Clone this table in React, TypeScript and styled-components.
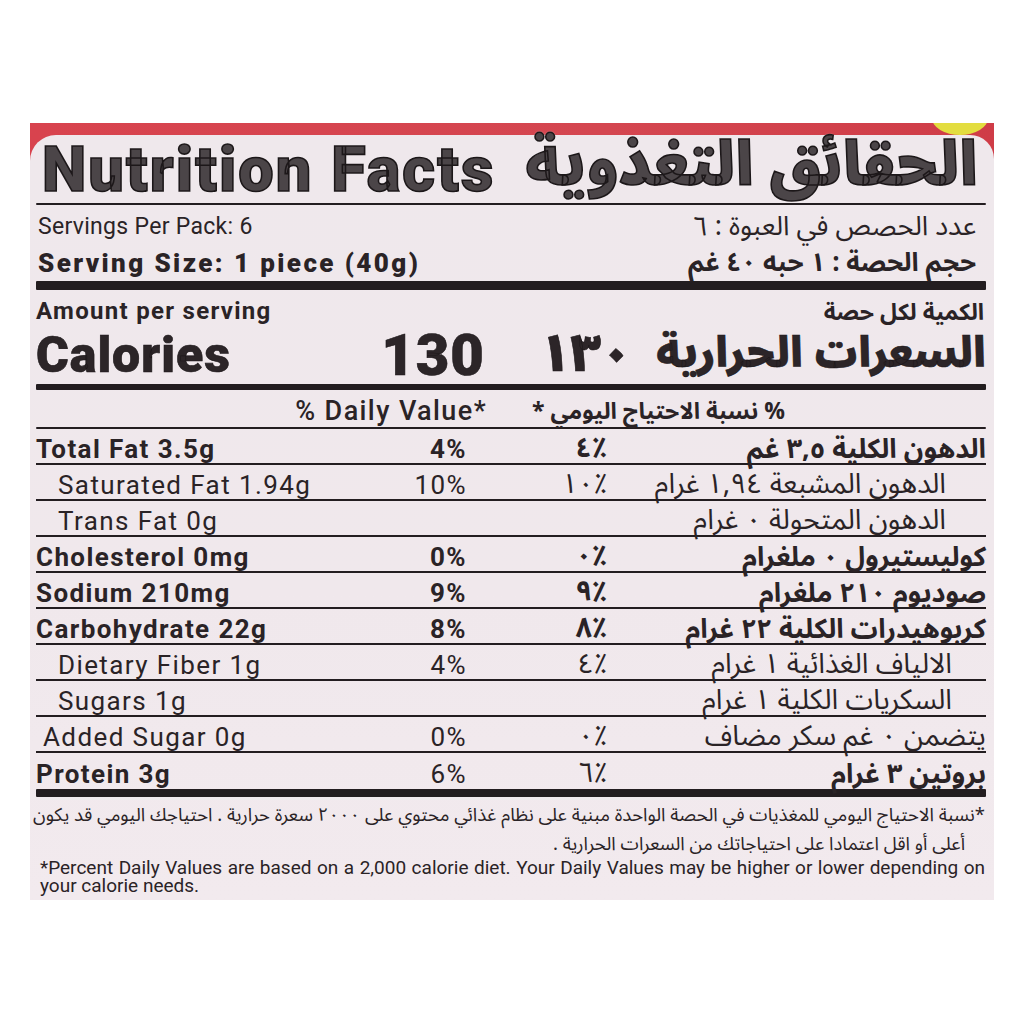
import React from 'react';
import styled, { createGlobalStyle } from 'styled-components';

const EN = `"Roboto", "Liberation Sans", sans-serif`;
const AR = `"Noto Sans Arabic", "Noto Kufi Arabic", "DejaVu Sans", sans-serif`;
const INK = '#2a2326';

const Global = createGlobalStyle`
  html, body { margin: 0; padding: 0; background: #ffffff; }
  body { width: 1024px; height: 1024px; overflow: hidden; }
`;

const Photo = styled.div`
  position: relative;
  margin: 123px 0 0 30px;
  width: 964px;
  height: 777px;
  box-sizing: border-box;
  padding: 12px 0 0 0;
  background: linear-gradient(90deg, #d8434e 0%, #d44650 60%, #cf3c47 100%);
  overflow: hidden;
`;

const Blob = styled.div`
  position: absolute;
  right: 6px;
  top: -22px;
  width: 56px;
  height: 34px;
  border-radius: 50%;
  background: #e3dd3f;
`;

const Label = styled.div`
  height: 100%;
  box-sizing: border-box;
  padding: 0 8px 0 6px;
  background: linear-gradient(180deg, #efe8ec 0%, #f0e8ec 60%, #f2eaee 100%);
  border-radius: 26px 24px 0 0;
  color: ${INK};
  font-family: ${EN};
`;

const TitleRow = styled.div`
  height: 68px;
  display: flex;
  align-items: center;
  justify-content: space-between;
  padding: 0 8px 0 6px;
`;

const Title = styled.div<{ $ar?: boolean }>`
  font-family: ${(p) => (p.$ar ? AR : EN)};
  font-weight: 900;
  font-size: ${(p) => (p.$ar ? '60px' : '63px')};
  line-height: 1;
  color: #4b4548;
  -webkit-text-stroke: 1.6px #1c1719;
  text-shadow: 0 0 2px #ffffff, 0 0 1px #ffffff;
  letter-spacing: ${(p) => (p.$ar ? '0' : '2.1px')};
  direction: ${(p) => (p.$ar ? 'rtl' : 'ltr')};
  padding-bottom: ${(p) => (p.$ar ? '6px' : '0')};
  white-space: nowrap;
`;

const Rule = styled.div<{ $h: number }>`
  height: ${(p) => p.$h}px;
  background: #231d20;
  border-radius: 1px;
`;

const InfoBlock = styled.div`
  padding-top: 4px;
`;

const InfoRow = styled.div<{ $h: number }>`
  height: ${(p) => p.$h}px;
  display: flex;
  align-items: center;
  justify-content: space-between;
  padding: 0 10px 0 2px;
`;

const EnText = styled.span<{ $size: number; $weight?: number; $ls?: number }>`
  font-family: ${EN};
  font-size: ${(p) => p.$size}px;
  font-weight: ${(p) => p.$weight ?? 400};
  letter-spacing: ${(p) => p.$ls ?? 0}px;
  line-height: 1.1;
  white-space: nowrap;
`;

const ArText = styled.span<{ $size: number; $weight?: number }>`
  font-family: ${AR};
  font-size: ${(p) => p.$size}px;
  font-weight: ${(p) => p.$weight ?? 400};
  line-height: 1.05;
  direction: rtl;
  white-space: nowrap;
`;

const AmountRow = styled.div`
  height: 36px;
  box-sizing: border-box;
  padding: 0 2px 1px 0;
  display: flex;
  align-items: flex-end;
  justify-content: space-between;
`;

const AmountEn = styled(EnText)`
  margin-bottom: 1px;
`;

const CaloriesRow = styled.div`
  height: 58px;
  display: grid;
  grid-template-columns: 449px 1fr;
  align-items: center;
`;

const CalLeft = styled.div`
  display: flex;
  align-items: center;
  justify-content: space-between;
`;

const CalRight = styled.div`
  display: flex;
  align-items: center;
  justify-content: space-between;
  padding-left: 55px;
`;

const BigEn = styled.span<{ $size: number; $ls?: number }>`
  font-family: ${EN};
  font-size: ${(p) => p.$size}px;
  font-weight: 900;
  letter-spacing: ${(p) => p.$ls ?? 0}px;
  line-height: 1;
  color: #2c2528;
  -webkit-text-stroke: 0.6px #1c1719;
`;

const BigAr = styled.span<{ $size: number }>`
  font-family: ${AR};
  font-size: ${(p) => p.$size}px;
  font-weight: 900;
  line-height: 1;
  direction: rtl;
  color: #2c2528;
  -webkit-text-stroke: 0.6px #1c1719;
`;

const DvRow = styled.div`
  height: 37px;
  box-sizing: border-box;
  padding-top: 5px;
  display: flex;
  align-items: center;
`;

const DvEn = styled.div`
  width: 451px;
  text-align: right;
  font-size: 27px;
  letter-spacing: 1.4px;
  font-weight: 500;
  line-height: 1;
`;

const DvAr = styled.div`
  width: 255px;
  margin-left: 43px;
  text-align: right;
  direction: rtl;
  font-family: ${AR};
  font-size: 23px;
  font-weight: 700;
  line-height: 1;
  white-space: nowrap;
`;

const Row = styled.div<{ $last?: boolean }>`
  height: 36px;
  box-sizing: border-box;
  padding-top: 6px;
  display: grid;
  grid-template-columns: 300px 131px 140px 1fr;
  align-items: center;
  border-bottom: ${(p) => (p.$last ? 'none' : `2px solid #231d20`)};
`;

const RowLabel = styled.span<{ $bold?: boolean; $indent: number }>`
  padding-left: ${(p) => p.$indent}px;
  font-size: 26px;
  letter-spacing: 1.4px;
  line-height: 1;
  font-weight: ${(p) => (p.$bold ? 700 : 400)};
  white-space: nowrap;
`;

const RowPct = styled.span<{ $bold?: boolean }>`
  text-align: right;
  font-size: 26px;
  letter-spacing: 1.4px;
  line-height: 1;
  font-weight: ${(p) => (p.$bold ? 700 : 400)};
`;

const RowArPct = styled.span<{ $bold?: boolean }>`
  text-align: right;
  font-family: ${AR};
  font-size: 28px;
  line-height: 1;
  font-weight: ${(p) => (p.$bold ? 700 : 400)};
`;

const RowArLabel = styled.span<{ $bold?: boolean; $indent: number }>`
  text-align: right;
  direction: rtl;
  padding-right: ${(p) => p.$indent}px;
  font-family: ${AR};
  font-size: ${(p) => (p.$bold ? 27 : 28)}px;
  line-height: 1;
  font-weight: ${(p) => (p.$bold ? 700 : 400)};
  white-space: nowrap;
`;

const Footer = styled.div`
  padding: 4px 1px 0 4px;
`;

const FootAr = styled.div<{ $pad: number; $justify?: boolean }>`
  height: 29px;
  line-height: 29px;
  direction: rtl;
  text-align: ${(p) => (p.$justify ? 'justify' : 'right')};
  text-align-last: ${(p) => (p.$justify ? 'justify' : 'right')};
  padding-right: ${(p) => p.$pad}px;
  font-family: ${AR};
  font-size: 18.5px;
  white-space: nowrap;
`;

const FootEn = styled.div<{ $justify?: boolean }>`
  height: 18px;
  line-height: 18px;
  text-align: ${(p) => (p.$justify ? 'justify' : 'left')};
  text-align-last: ${(p) => (p.$justify ? 'justify' : 'left')};
  font-size: 19px;
  white-space: nowrap;
`;

type Nutrient = {
  en: string;
  pct: string;
  ar: string;
  arPct: string;
  bold?: boolean;
  indent: number;
  arIndent: number;
  pctBold?: boolean;
};

const rows: Nutrient[] = [
  { en: 'Total Fat 3.5g', pct: '4%', ar: 'الدهون الكلية ٣,٥ غم', arPct: '٤٪', bold: true, pctBold: true, indent: 0, arIndent: 0 },
  { en: 'Saturated Fat 1.94g', pct: '10%', ar: 'الدهون المشبعة ١,٩٤ غرام', arPct: '١٠٪', indent: 22, arIndent: 40 },
  { en: 'Trans Fat 0g', pct: '', ar: 'الدهون المتحولة ٠ غرام', arPct: '', indent: 22, arIndent: 40 },
  { en: 'Cholesterol 0mg', pct: '0%', ar: 'كوليستيرول ٠ ملغرام', arPct: '٠٪', bold: true, pctBold: true, indent: 0, arIndent: 0 },
  { en: 'Sodium 210mg', pct: '9%', ar: 'صوديوم ٢١٠ ملغرام', arPct: '٩٪', bold: true, pctBold: true, indent: 0, arIndent: 0 },
  { en: 'Carbohydrate 22g', pct: '8%', ar: 'كربوهيدرات الكلية ٢٢ غرام', arPct: '٨٪', bold: true, pctBold: true, indent: 0, arIndent: 0 },
  { en: 'Dietary Fiber 1g', pct: '4%', ar: 'الالياف الغذائية ١ غرام', arPct: '٤٪', indent: 22, arIndent: 34 },
  { en: 'Sugars 1g', pct: '', ar: 'السكريات الكلية ١ غرام', arPct: '', indent: 22, arIndent: 34 },
  { en: 'Added Sugar 0g', pct: '0%', ar: 'يتضمن ٠ غم سكر مضاف', arPct: '٠٪', indent: 7, arIndent: 0 },
  { en: 'Protein 3g', pct: '6%', ar: 'بروتين ٣ غرام', arPct: '٦٪', bold: true, indent: 0, arIndent: 0 },
];

export default function App() {
  return (
    <>
      <Global />
      <Photo>
        <Blob />
        <Label>
          <TitleRow>
            <Title>Nutrition Facts</Title>
            <Title $ar>الحقائق التغذوية</Title>
          </TitleRow>
          <Rule $h={2} />
          <InfoBlock>
            <InfoRow $h={36}>
              <EnText $size={23} $ls={0.3}>Servings Per Pack: 6</EnText>
              <ArText $size={27}>عدد الحصص في العبوة : ٦</ArText>
            </InfoRow>
            <InfoRow $h={36}>
              <EnText $size={26} $weight={900} $ls={2.4}>Serving Size: 1 piece (40g)</EnText>
              <ArText $size={26} $weight={700}>حجم الحصة : ١ حبه ٤٠ غم</ArText>
            </InfoRow>
          </InfoBlock>
          <Rule $h={9} />
          <AmountRow>
            <AmountEn $size={24} $weight={700} $ls={1.3}>Amount per serving</AmountEn>
            <ArText $size={23} $weight={700}>الكمية لكل حصة</ArText>
          </AmountRow>
          <CaloriesRow>
            <CalLeft>
              <BigEn $size={50} $ls={1}>Calories</BigEn>
              <BigEn $size={58} $ls={1}>130</BigEn>
            </CalLeft>
            <CalRight>
              <BigAr $size={52}>١٣٠</BigAr>
              <BigAr $size={41.5}>السعرات الحرارية</BigAr>
            </CalRight>
          </CaloriesRow>
          <Rule $h={6} />
          <DvRow>
            <DvEn>% Daily Value*</DvEn>
            <DvAr>% نسبة الاحتياج اليومي *</DvAr>
          </DvRow>
          <Rule $h={2} />
          {rows.map((r, i) => (
            <Row key={r.en} $last={i === rows.length - 1}>
              <RowLabel $bold={r.bold} $indent={r.indent}>{r.en}</RowLabel>
              <RowPct $bold={r.pctBold}>{r.pct}</RowPct>
              <RowArPct $bold={r.pctBold}>{r.arPct}</RowArPct>
              <RowArLabel $bold={r.bold} $indent={r.arIndent}>{r.ar}</RowArLabel>
            </Row>
          ))}
          <Rule $h={8} />
          <Footer>
            <FootAr $pad={0} $justify>
              *نسبة الاحتياج اليومي للمغذيات في الحصة الواحدة مبنية على نظام غذائي محتوي على ٢٠٠٠ سعرة حرارية . احتياجك اليومي قد يكون
            </FootAr>
            <FootAr $pad={20}>أعلى أو اقل اعتمادا على احتياجاتك من السعرات الحرارية .</FootAr>
            <FootEn $justify>
              *Percent Daily Values are based on a 2,000 calorie diet. Your Daily Values may be higher or lower depending on
            </FootEn>
            <FootEn>your calorie needs.</FootEn>
          </Footer>
        </Label>
      </Photo>
    </>
  );
}
